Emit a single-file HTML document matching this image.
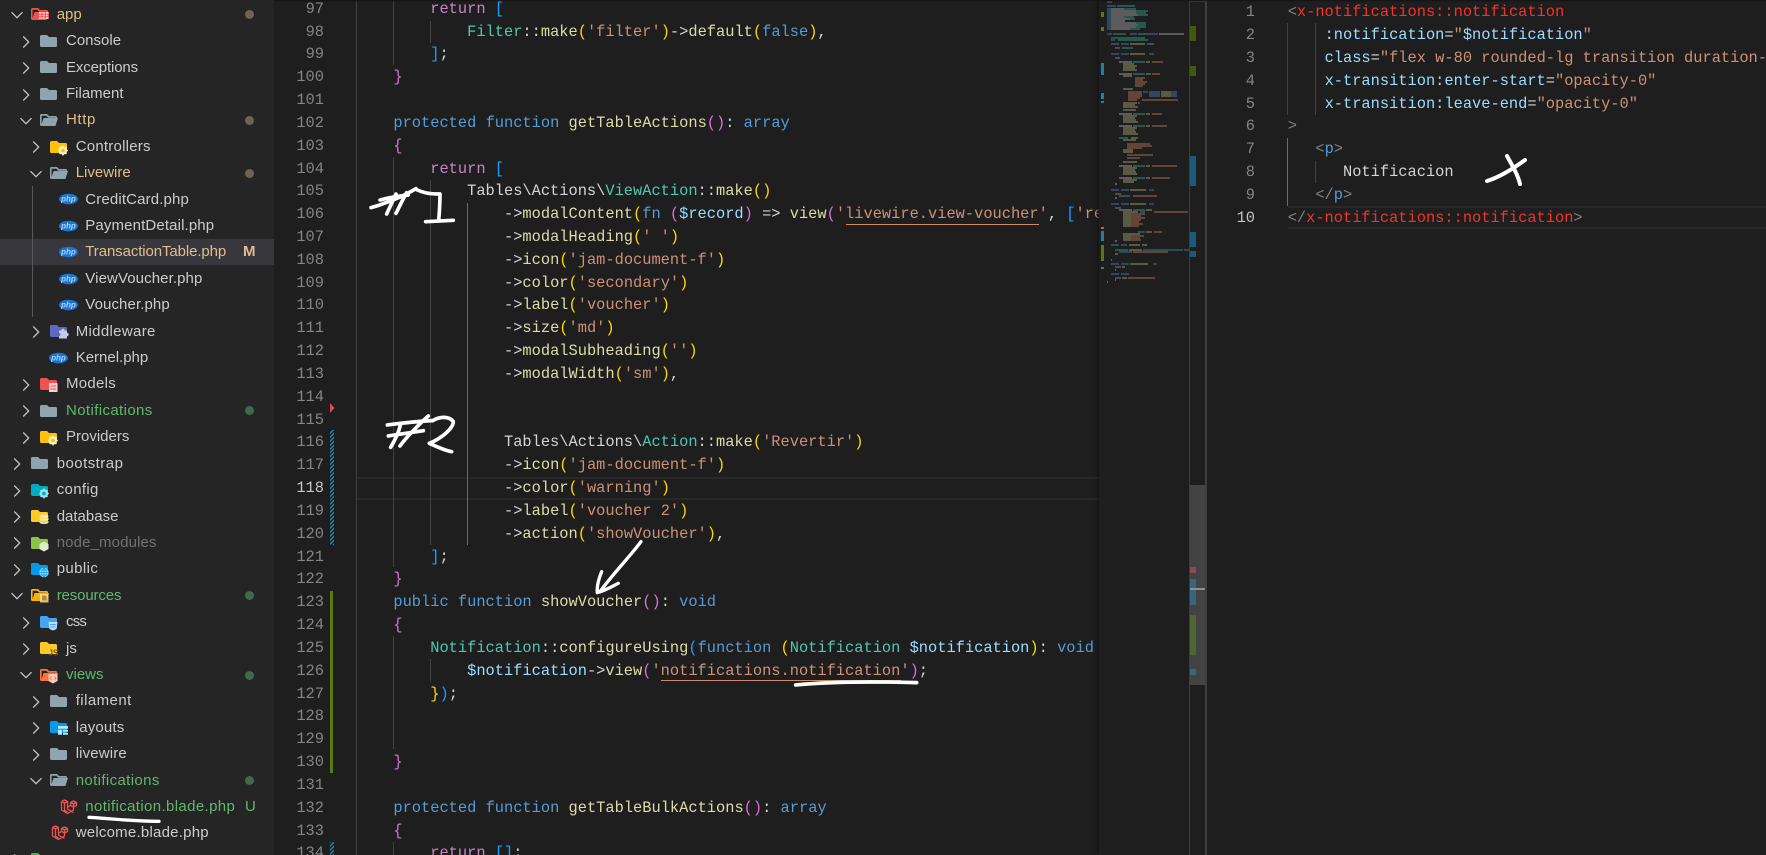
<!DOCTYPE html>
<html lang="en"><head><meta charset="utf-8"><title>Editor</title>
<style>
html,body{margin:0;padding:0;width:1766px;height:855px;overflow:hidden;background:#1e1e1e}
#root{position:absolute;left:0;top:0;width:1766px;height:855px;overflow:hidden;background:#1e1e1e}
.abs,.side,.nums,.code,.guide,.mm{position:absolute}
.side{left:0;top:0;width:274px;height:855px;background:#252526;overflow:hidden;font:15px/26.42px "Liberation Sans",sans-serif;color:#ccc}
.tree{position:absolute;left:0;top:1.8px;width:274px}
.r{position:relative;height:26.42px;white-space:nowrap}
.r span{position:absolute;top:0}
.r svg{position:absolute;top:3.7px;width:18px;height:18px;overflow:visible}
.r svg.c{width:16px;height:16px;top:5.5px}
.o{color:#dfbf8c}.gr{color:#5fb96c}.dim{color:#727272}
.dot{position:absolute;left:245px;top:8.6px;width:9px;height:9px;border-radius:50%;background:#6f6453}
.dot.g{background:#3d6a4a}
.sel{background:#37373d}
.bd{left:243px;font-weight:bold;font-size:15px}
.nums,.code{font:15.37px/22.83px "Liberation Mono",monospace}
.nums{text-align:right;color:#858585;white-space:pre;overflow:hidden}
.nums b{font-weight:normal;color:#c6c6c6}
.code{color:#d4d4d4;overflow:hidden}
.code div{height:22.83px;white-space:pre}
.k{color:#c586c0}.b{color:#569cd6}.f{color:#dcdcaa}.t{color:#4ec9b0}.s{color:#ce9178}.v{color:#9cdcfe}.g{color:#ffd700}.p{color:#da70d6}.u{color:#179fff}.a{color:#808080}.e{color:#f0342e}
.guide{width:1px;background:#404040}
.guide.h{background:#6a6a6a}
.hatch{position:absolute;left:330px;width:4px;background:repeating-linear-gradient(-45deg,#1f86ad 0 1.4px,#1e1e1e 1.4px 2.8px)}
</style></head>
<body>
<div id="root">
<svg width="0" height="0" style="position:absolute">
<defs>
<symbol id="fc" viewBox="0 0 18 18"><path fill="currentColor" d="M1.5 3H7l2 2h6.5A1.5 1.5 0 0 1 17 6.5v7a1.5 1.5 0 0 1-1.5 1.5h-14A1.5 1.5 0 0 1 0 13.5v-9A1.5 1.5 0 0 1 1.5 3z"/></symbol>
<symbol id="fo" viewBox="0 0 18 18"><path fill="currentColor" d="M1.5 3H7l2 2h6.5A1.5 1.5 0 0 1 17 6.5V8h-1.5V6.8H8.3l-2-2H1.6V13l2-6h14.4l-2.6 8H1.5A1.5 1.5 0 0 1 0 13.5v-9A1.5 1.5 0 0 1 1.5 3z"/></symbol>
<symbol id="cr" viewBox="0 0 16 16"><path fill="none" stroke="#c5c5c5" stroke-width="1.25" d="M5.2 2.5 10.7 8l-5.5 5.5"/></symbol>
<symbol id="cd" viewBox="0 0 16 16"><path fill="none" stroke="#c5c5c5" stroke-width="1.25" d="M2.5 5.2 8 10.7l5.5-5.5"/></symbol>
<symbol id="gear" viewBox="0 0 18 18"><circle cx="13" cy="12.5" r="3" fill="none" stroke="currentColor" stroke-width="2.2"/><path stroke="currentColor" stroke-width="1.6" d="M13 7.6v2M13 15.4v2M8.2 12.5h2M15.8 12.5h2M9.6 9.1l1.4 1.4M15 14.5l1.4 1.4M9.6 15.9l1.4-1.4M15 10.5l1.4-1.4"/></symbol>
<symbol id="lv" viewBox="0 0 18 18"><path fill="none" stroke="#ef5350" stroke-width="1.3" stroke-linejoin="round" d="M1.5 3.5 4.5 2l3 1.5V11l6 3.5M1.5 3.5V12l6 3.5 6-3.5V9l3-1.5v-3L13.5 3l-3 1.5v3L7.5 9.3M1.5 3.5l3 1.6 3-1.6M4.5 5.1v7.2l3 1.8M10.5 4.5l3 1.5 3-1.5M13.5 6v3M10.5 7.5l3 1.5"/></symbol>
</defs>
</svg>

<div class="side">
<div class="abs sel" style="left:0;top:239px;width:274px;height:26px"></div>
<div class="abs" style="left:32px;top:186px;width:1px;height:131px;background:#585858"></div>
<div class="tree">
<div class="r"><svg class="c" style="left:9px"><use href="#cd"/></svg><svg style="left:31px;color:#ef5350"><use href="#fo"/><path fill="#ffcdd2" d="M8 7h9.5v7H8z"/><path stroke="#ef5350" d="M8 9.3h10M8 11.7h10M11 7v7.500M14.300 7v7.500"/></svg><span class="o" style="left:56.700px">app</span><i class="dot"></i></div>
<div class="r"><svg class="c" style="left:18.300px"><use href="#cr"/></svg><svg style="left:40.300px;color:#90a4ae"><use href="#fc"/></svg><span style="left:66px">Console</span></div>
<div class="r"><svg class="c" style="left:18.300px"><use href="#cr"/></svg><svg style="left:40.300px;color:#90a4ae"><use href="#fc"/></svg><span style="left:66px;letter-spacing:-.14px">Exceptions</span></div>
<div class="r"><svg class="c" style="left:18.300px"><use href="#cr"/></svg><svg style="left:40.300px;color:#90a4ae"><use href="#fc"/></svg><span style="left:66px">Filament</span></div>
<div class="r"><svg class="c" style="left:18.300px"><use href="#cd"/></svg><svg style="left:40.300px;color:#90a4ae"><use href="#fo"/></svg><span class="o" style="left:66px;letter-spacing:.6px">Http</span><i class="dot"></i></div>
<div class="r"><svg class="c" style="left:27.700px"><use href="#cr"/></svg><svg style="left:49.700px;color:#ffc107"><use href="#fc"/><use href="#gear" style="color:#fff3c4" width="18" height="18"/></svg><span style="left:75.700px;letter-spacing:.23px">Controllers</span></div>
<div class="r"><svg class="c" style="left:27.700px"><use href="#cd"/></svg><svg style="left:49.700px;color:#90a4ae"><use href="#fo"/></svg><span class="o" style="left:75.700px">Livewire</span><i class="dot"></i></div>
<div class="r"><svg style="left:59px"><ellipse cx="9.500" cy="9" rx="9.500" ry="5.300" fill="#1976d2"/><text x="9.500" y="11.500" text-anchor="middle" font-family="Liberation Sans" font-size="8" font-style="italic" font-weight="bold" fill="#a9d2f7">php</text></svg><span style="left:85.300px;letter-spacing:.14px">CreditCard.php</span></div>
<div class="r"><svg style="left:59px"><ellipse cx="9.500" cy="9" rx="9.500" ry="5.300" fill="#1976d2"/><text x="9.500" y="11.500" text-anchor="middle" font-family="Liberation Sans" font-size="8" font-style="italic" font-weight="bold" fill="#a9d2f7">php</text></svg><span style="left:85.300px;letter-spacing:.13px">PaymentDetail.php</span></div>
<div class="r"><svg style="left:59px"><ellipse cx="9.500" cy="9" rx="9.500" ry="5.300" fill="#1976d2"/><text x="9.500" y="11.500" text-anchor="middle" font-family="Liberation Sans" font-size="8" font-style="italic" font-weight="bold" fill="#a9d2f7">php</text></svg><span class="o" style="left:85.300px;letter-spacing:-.1px">TransactionTable.php</span><span class="o bd">M</span></div>
<div class="r"><svg style="left:59px"><ellipse cx="9.500" cy="9" rx="9.500" ry="5.300" fill="#1976d2"/><text x="9.500" y="11.500" text-anchor="middle" font-family="Liberation Sans" font-size="8" font-style="italic" font-weight="bold" fill="#a9d2f7">php</text></svg><span style="left:85.300px;letter-spacing:.1px">ViewVoucher.php</span></div>
<div class="r"><svg style="left:59px"><ellipse cx="9.500" cy="9" rx="9.500" ry="5.300" fill="#1976d2"/><text x="9.500" y="11.500" text-anchor="middle" font-family="Liberation Sans" font-size="8" font-style="italic" font-weight="bold" fill="#a9d2f7">php</text></svg><span style="left:85.300px;letter-spacing:.1px">Voucher.php</span></div>
<div class="r"><svg class="c" style="left:27.700px"><use href="#cr"/></svg><svg style="left:49.700px;color:#5c6bc0"><use href="#fc"/><path fill="#c5cae9" d="M9 10h2.300a1.700 1.700 0 1 1 3.400 0H17v2.300a1.700 1.700 0 1 1 0 3.400V18H9v-2.500a1.500 1.500 0 1 0 0-3z" transform="translate(0 -1.500)"/></svg><span style="left:75.700px;letter-spacing:.33px">Middleware</span></div>
<div class="r"><svg style="left:49.300px"><ellipse cx="9.500" cy="9" rx="9.500" ry="5.300" fill="#1976d2"/><text x="9.500" y="11.500" text-anchor="middle" font-family="Liberation Sans" font-size="8" font-style="italic" font-weight="bold" fill="#a9d2f7">php</text></svg><span style="left:75.700px">Kernel.php</span></div>
<div class="r"><svg class="c" style="left:18.300px"><use href="#cr"/></svg><svg style="left:40.300px;color:#ef5350"><use href="#fc"/><path fill="#ffcdd2" d="M9 8h8.500v9H9z"/><path stroke="#ef5350" d="M10.500 11h5.500M10.500 14h5.500"/></svg><span style="left:66px;letter-spacing:.28px">Models</span></div>
<div class="r"><svg class="c" style="left:18.300px"><use href="#cr"/></svg><svg style="left:40.300px;color:#90a4ae"><use href="#fc"/></svg><span class="gr" style="left:66px;letter-spacing:.38px">Notifications</span><i class="dot g"></i></div>
<div class="r"><svg class="c" style="left:18.300px"><use href="#cr"/></svg><svg style="left:40.300px;color:#ffc107"><use href="#fc"/><use href="#gear" style="color:#fff3c4" width="18" height="18"/></svg><span style="left:66px">Providers</span></div>
<div class="r"><svg class="c" style="left:9px"><use href="#cr"/></svg><svg style="left:31px;color:#90a4ae"><use href="#fc"/></svg><span style="left:56.700px;letter-spacing:.46px">bootstrap</span></div>
<div class="r"><svg class="c" style="left:9px"><use href="#cr"/></svg><svg style="left:31px;color:#00acc1"><use href="#fc"/><use href="#gear" style="color:#9be7f2" width="18" height="18"/></svg><span style="left:56.700px;letter-spacing:.33px">config</span></div>
<div class="r"><svg class="c" style="left:9px"><use href="#cr"/></svg><svg style="left:31px;color:#ffca28"><use href="#fc"/><ellipse cx="13" cy="9.500" rx="4.500" ry="2" fill="#ffe9a8"/><path fill="#ffe9a8" d="M8.500 10.800c1.500 1.600 7.500 1.600 9 0v2c-1.500 1.600-7.500 1.600-9 0zM8.500 14c1.500 1.600 7.500 1.600 9 0v1.500c-1 2-8 2-9 0z"/></svg><span style="left:56.700px">database</span></div>
<div class="r"><svg class="c" style="left:9px"><use href="#cr"/></svg><svg style="left:31px;color:#8bc34a"><use href="#fc"/><path fill="#dcedc8" d="M13 7.500l4.500 2.500v5L13 17.500 8.500 15v-5z"/></svg><span class="dim" style="left:56.700px;letter-spacing:.13px">node_modules</span></div>
<div class="r"><svg class="c" style="left:9px"><use href="#cr"/></svg><svg style="left:31px;color:#039be5"><use href="#fc"/><circle cx="13" cy="12.500" r="4.700" fill="#b3e0fa"/><path fill="none" stroke="#039be5" stroke-width=".7" d="M8.300 12.500h9.400M13 7.800v9.400M9 10h8M9 15h8M13 7.800c-3 3-3 6.400 0 9.400M13 7.800c3 3 3 6.400 0 9.400"/></svg><span style="left:56.700px;letter-spacing:.4px">public</span></div>
<div class="r"><svg class="c" style="left:9px"><use href="#cd"/></svg><svg style="left:31px;color:#ffb300"><use href="#fo"/><path fill="#ffe0a0" fill-opacity=".8" d="M9 8h8.500v8.500H9z"/><path fill="#b58a38" d="M11 9.500h4.500v5H11z"/></svg><span class="gr" style="left:56.700px;letter-spacing:-.13px">resources</span><i class="dot g"></i></div>
<div class="r"><svg class="c" style="left:18.300px"><use href="#cr"/></svg><svg style="left:40.300px;color:#42a5f5"><use href="#fc"/><path fill="#bbdefb" d="M8.500 9h9l-.9 7-3.600 1.500L9.400 16z"/><path stroke="#42a5f5" d="M10 11.500h6M10.500 14h5"/></svg><span style="left:66px;letter-spacing:-.8px">css</span></div>
<div class="r"><svg class="c" style="left:18.300px"><use href="#cr"/></svg><svg style="left:40.300px;color:#ffca28"><use href="#fc"/><text x="8.500" y="16.500" font-family="Liberation Sans" font-size="8" font-weight="bold" fill="#7a5a10">JS</text></svg><span style="left:66px">js</span></div>
<div class="r"><svg class="c" style="left:18.300px"><use href="#cd"/></svg><svg style="left:40.300px;color:#ff7043"><use href="#fo"/><path fill="#ffccbc" d="M8.500 8h9v7l-4.500 2.500L8.500 15z"/><path fill="none" stroke="#ff7043" d="M11.500 10.500 10 12.200l1.500 1.700M14.500 10.500l1.500 1.700-1.500 1.700"/></svg><span class="gr" style="left:66px">views</span><i class="dot g"></i></div>
<div class="r"><svg class="c" style="left:27.700px"><use href="#cr"/></svg><svg style="left:49.700px;color:#90a4ae"><use href="#fc"/></svg><span style="left:75.700px;letter-spacing:.44px">filament</span></div>
<div class="r"><svg class="c" style="left:27.700px"><use href="#cr"/></svg><svg style="left:49.700px;color:#039be5"><use href="#fc"/><path fill="#b3e5fc" d="M8 8h10v2.700H8zM8 11.700h4v5H8zM13 11.700h5v2H13zM13 14.700h5v2H13z"/></svg><span style="left:75.700px;letter-spacing:.17px">layouts</span></div>
<div class="r"><svg class="c" style="left:27.700px"><use href="#cr"/></svg><svg style="left:49.700px;color:#90a4ae"><use href="#fc"/></svg><span style="left:75.700px;letter-spacing:.14px">livewire</span></div>
<div class="r"><svg class="c" style="left:27.700px"><use href="#cd"/></svg><svg style="left:49.700px;color:#90a4ae"><use href="#fo"/></svg><span class="gr" style="left:75.700px;letter-spacing:.37px">notifications</span><i class="dot g"></i></div>
<div class="r"><svg style="left:60px"><use href="#lv"/></svg><span class="gr" style="left:85.300px;letter-spacing:.37px">notification.blade.php</span><span class="gr bd" style="left:245px;font-weight:normal">U</span></div>
<div class="r"><svg style="left:50.500px"><use href="#lv"/></svg><span style="left:75.700px;letter-spacing:.23px">welcome.blade.php</span></div>
<div class="r"><svg class="c" style="left:9px"><use href="#cr"/></svg><svg style="left:31px;color:#4caf50"><use href="#fc"/></svg></div>
</div>
</div>

<!-- active-line highlights -->
<div class="abs" style="left:357px;top:477px;width:742px;height:18.500px;border:solid #282828;border-width:2px 0"></div>
<div class="abs" style="left:1288px;top:205.500px;width:478px;height:19px;border:solid #282828;border-width:2px 0"></div>

<!-- indent guides -->
<i class="guide" style="left:356px;top:0;height:855px"></i>
<i class="guide" style="left:393px;top:0;height:65px"></i>
<i class="guide" style="left:393px;top:157px;height:410px"></i>
<i class="guide" style="left:393px;top:636px;height:113px"></i>
<i class="guide" style="left:393px;top:842px;height:13px"></i>
<i class="guide" style="left:430px;top:21px;height:22px"></i>
<i class="guide" style="left:430px;top:180px;height:365px"></i>
<i class="guide" style="left:430px;top:659px;height:23px"></i>
<i class="guide h" style="left:467px;top:203px;height:342px"></i>
<i class="guide" style="left:1287px;top:23px;height:92px"></i>
<i class="guide h" style="left:1287px;top:138px;height:68px"></i>
<i class="guide" style="left:1315px;top:23px;height:92px"></i>
<i class="guide" style="left:1315px;top:161px;height:22px"></i>

<!-- left gutter -->
<div class="nums" style="left:280px;width:44px;top:-2.300px;height:857.300px">97
98
99
100
101
102
103
104
105
106
107
108
109
110
111
112
113
114
115
116
117
<b>118</b>
119
120
121
122
123
124
125
126
127
128
129
130
131
132
133
134</div>
<div class="hatch" style="top:430px;height:115px"></div>
<div class="hatch" style="top:842px;height:13px"></div>
<div class="abs" style="left:330px;top:591px;width:3px;height:182px;background:#587c0c"></div>
<svg class="abs" style="left:330px;top:403px" width="5" height="10"><path fill="#e4474f" d="M0 0l4.500 5L0 10z"/></svg>

<!-- left code -->
<div class="code" style="left:356.500px;top:-2.300px;width:742.500px;height:857.300px">
<div>        <span class="k">return</span> <span class="u">[</span></div>
<div>            <span class="t">Filter</span>::<span class="f">make</span><span class="g">(</span><span class="s">'filter'</span><span class="g">)</span>-&gt;<span class="f">default</span><span class="g">(</span><span class="b">false</span><span class="g">)</span>,</div>
<div>        <span class="u">]</span>;</div>
<div>    <span class="p">}</span></div>
<div></div>
<div>    <span class="b">protected</span> <span class="b">function</span> <span class="f">getTableActions</span><span class="p">()</span>: <span class="b">array</span></div>
<div>    <span class="p">{</span></div>
<div>        <span class="k">return</span> <span class="u">[</span></div>
<div>            Tables\Actions\<span class="t">ViewAction</span>::<span class="f">make</span><span class="g">()</span></div>
<div>                -&gt;<span class="f">modalContent</span><span class="g">(</span><span class="b">fn</span> <span class="p">(</span><span class="v">$record</span><span class="p">)</span> =&gt; <span class="f">view</span><span class="p">(</span><span class="s">'livewire.view-voucher'</span>, <span class="u">[</span><span class="s">'re</span></div>
<div>                -&gt;<span class="f">modalHeading</span><span class="g">(</span><span class="s">' '</span><span class="g">)</span></div>
<div>                -&gt;<span class="f">icon</span><span class="g">(</span><span class="s">'jam-document-f'</span><span class="g">)</span></div>
<div>                -&gt;<span class="f">color</span><span class="g">(</span><span class="s">'secondary'</span><span class="g">)</span></div>
<div>                -&gt;<span class="f">label</span><span class="g">(</span><span class="s">'voucher'</span><span class="g">)</span></div>
<div>                -&gt;<span class="f">size</span><span class="g">(</span><span class="s">'md'</span><span class="g">)</span></div>
<div>                -&gt;<span class="f">modalSubheading</span><span class="g">(</span><span class="s">''</span><span class="g">)</span></div>
<div>                -&gt;<span class="f">modalWidth</span><span class="g">(</span><span class="s">'sm'</span><span class="g">)</span>,</div>
<div></div>
<div></div>
<div>                Tables\Actions\<span class="t">Action</span>::<span class="f">make</span><span class="g">(</span><span class="s">'Revertir'</span><span class="g">)</span></div>
<div>                -&gt;<span class="f">icon</span><span class="g">(</span><span class="s">'jam-document-f'</span><span class="g">)</span></div>
<div>                -&gt;<span class="f">color</span><span class="g">(</span><span class="s">'warning'</span><span class="g">)</span></div>
<div>                -&gt;<span class="f">label</span><span class="g">(</span><span class="s">'voucher 2'</span><span class="g">)</span></div>
<div>                -&gt;<span class="f">action</span><span class="g">(</span><span class="s">'showVoucher'</span><span class="g">)</span>,</div>
<div>        <span class="u">]</span>;</div>
<div>    <span class="p">}</span></div>
<div>    <span class="b">public</span> <span class="b">function</span> <span class="f">showVoucher</span><span class="p">()</span>: <span class="b">void</span></div>
<div>    <span class="p">{</span></div>
<div>        <span class="t">Notification</span>::<span class="f">configureUsing</span><span class="u">(</span><span class="b">function</span> <span class="g">(</span><span class="t">Notification</span> <span class="v">$notification</span><span class="g">)</span>: <span class="b">void</span></div>
<div>            <span class="v">$notification</span>-&gt;<span class="f">view</span><span class="p">(</span><span class="s">'notifications.notification'</span><span class="p">)</span>;</div>
<div>        <span class="g">}</span><span class="u">)</span>;</div>
<div></div>
<div></div>
<div>    <span class="p">}</span></div>
<div></div>
<div>    <span class="b">protected</span> <span class="b">function</span> <span class="f">getTableBulkActions</span><span class="p">()</span>: <span class="b">array</span></div>
<div>    <span class="p">{</span></div>
<div>        <span class="k">return</span> <span class="u">[]</span>;</div>
</div>
<div class="abs" style="left:845.500px;top:224px;width:193.500px;height:1px;background:#d08a60"></div>
<div class="abs" style="left:661px;top:680px;width:240px;height:1px;background:#d08a60"></div>

<!-- minimap -->
<svg class="abs" style="left:1099px;top:0;background:#1e1e1e;box-shadow:-3px 0 4px -2px #111" width="90" height="855" viewBox="-1 0 90 855" fill="none" stroke-width="1.300">
<path stroke="#3b6082" d="M7 2h5M7 6h9M7 9h4M7 11h4M7 13h4M7 15h4M7 17h4M7 19h4M7 21h4M7 23h4M7 25h4M7 27h4M7 29h4M7 34h5M30 34h7M48 34h10M11 38h4M11 40h4M11 44h8M21 44h8M47 44h7M11 54h8M21 54h8M49 54h5M43 92h5M49 92h11M71 92h6M49 94h11M71 94h6M49 96h11M71 96h6M11 190h8M21 190h8M49 190h5M11 204h8M21 204h8M49 204h5M40 212h5M11 245h8M21 245h6M43 250h10M67 250h16M84 250h6M19 252h13M11 264h8M21 264h8M53 264h4M11 274h8M21 274h8"/>
<path stroke="#2f7a6a" d="M17 6h18M24 9h12M36 11h12M36 13h10M38 15h10M24 17h10M30 19h5M36 23h10M38 25h8M36 27h10M30 29h10M13 34h13M38 34h10M15 38h30M18 40h30M47 44h7M22 48h11M33 62h12M33 74h12M33 114h12M33 126h12M19 138h9M33 166h12M33 178h12M19 196h11M33 210h12M38 232h7M15 250h13M53 250h14"/>
<path stroke="#828282" d="M11 9h13M11 11h25M11 13h25M11 15h27M11 17h13M11 19h19M11 21h14M11 23h25M11 25h27M11 27h25M11 29h19M59 34h25M19 62h13M19 74h13M19 114h13M19 126h13M19 166h13M19 178h13M19 210h13M15 184h2M15 198h2M15 241h2M15 254h3M11 260h1M15 270h1M15 280h1M7 282h1"/>
<path stroke="#7f7f5c" d="M30 44h15M30 54h15M46 62h4M23 64h11M23 66h14M23 68h12M23 70h14M46 74h5M23 76h9M23 89h10M61 92h10M61 94h10M61 96h10M23 103h14M23 105h12M23 107h15M23 110h13M46 114h4M23 116h14M23 118h12M23 120h13M23 122h15M46 126h4M23 128h14M23 130h12M23 132h13M23 134h15M31 138h7M23 140h13M23 150h10M23 152h10M23 162h14M46 166h4M23 168h14M23 170h12M23 172h13M23 174h14M46 178h4M23 180h14M23 182h11M30 190h16M30 204h16M46 210h6M23 212h15M23 214h8M23 216h8M23 218h8M23 220h8M23 222h8M23 224h8M23 226h8M46 232h6M23 234h17M23 236h8M23 238h8M23 240h8M29 245h11M42 245h5M29 250h13M30 264h18M22 267h3M22 278h5"/>
<path stroke="#8a5d47" d="M52 62h11M52 74h8M35 78h10M35 80h8M35 82h12M35 84h10M35 86h8M28 92h14M28 94h14M28 96h14M28 98h12M28 100h9M42 100h36M38 103h2M52 114h10M52 126h15M27 144h23M27 146h25M27 148h15M27 155h13M40 155h13M27 158h13M52 166h25M52 178h18M33 196h24M54 212h34M31 214h14M31 216h10M31 218h14M31 220h10M31 222h8M31 224h12M31 226h8M54 232h8M31 236h13M31 238h9M31 240h10M33 252h35M28 278h27"/>
<path stroke="#7b5a79" d="M15 48h5M15 58h5M15 194h6M15 208h6M15 267h6M15 278h6"/>
<path d="M1 12h3v5H1zM1 27h3v4H1z" fill="#587c0c"/><path d="M1 63h3v12H1zM1 93h3v6H1zM1 101h3v2H1zM1 231h3v10H1zM1 267h3v2H1z" fill="#1b81a8"/><path d="M1 227h3v2H1z" fill="#e4474f"/><path d="M1 245h3v16H1z" fill="#587c0c"/>
</svg>

<!-- overview ruler -->
<div class="abs" style="left:1189px;top:0;width:1px;height:855px;background:#3c3c3c"></div>
<div class="abs" style="left:1189px;top:1px;width:16px;height:1px;background:#3c3c3c"></div>
<div class="abs" style="left:1205px;top:0;width:2px;height:855px;background:#3f3f3f"></div>
<div class="abs" style="left:1190px;top:485px;width:15px;height:200px;background:#434343"></div>
<div class="abs" style="left:1190px;top:26px;width:6px;height:15px;background:#40590f"></div>
<div class="abs" style="left:1190px;top:66px;width:6px;height:10px;background:#40590f"></div>
<div class="abs" style="left:1190px;top:156px;width:6px;height:30px;background:#1b5a78"></div>
<div class="abs" style="left:1190px;top:232px;width:6px;height:15px;background:#1b5a78"></div>
<div class="abs" style="left:1190px;top:251px;width:6px;height:6px;background:#1b5a78"></div>
<div class="abs" style="left:1190px;top:567px;width:6px;height:6px;background:#8c4a50"></div>
<div class="abs" style="left:1190px;top:579px;width:6px;height:26px;background:#39657f"></div>
<div class="abs" style="left:1190px;top:615px;width:6px;height:40px;background:#4f6633"></div>
<div class="abs" style="left:1190px;top:669px;width:6px;height:6px;background:#39657f"></div>
<div class="abs" style="left:1190px;top:588px;width:15px;height:2px;background:#8f8f8f"></div>

<!-- right pane -->
<div class="nums" style="left:1207px;width:48px;top:1.200px">1
2
3
4
5
6
7
8
9
<b>10</b></div>
<div class="code" style="left:1287.700px;top:1.200px;width:478.300px;height:240px">
<div><span class="a">&lt;</span><span class="e">x-notifications::notification</span></div>
<div>    <span class="v">:notification</span>=<span class="s">"</span><span class="v">$notification</span><span class="s">"</span></div>
<div>    <span class="v">class</span>=<span class="s">"flex w-80 rounded-lg transition duration-</span></div>
<div>    <span class="v">x-transition:enter-start</span>=<span class="s">"opacity-0"</span></div>
<div>    <span class="v">x-transition:leave-end</span>=<span class="s">"opacity-0"</span></div>
<div><span class="a">&gt;</span></div>
<div>   <span class="a">&lt;</span><span class="b">p</span><span class="a">&gt;</span></div>
<div>      Notificacion</div>
<div>   <span class="a">&lt;/</span><span class="b">p</span><span class="a">&gt;</span></div>
<div><span class="a">&lt;/</span><span class="e">x-notifications::notification</span><span class="a">&gt;</span></div>
</div>

<!-- top shadow -->
<div class="abs" style="left:274px;top:0;width:1492px;height:2px;background:linear-gradient(#121212,#1e1e1e00)"></div>

<!-- handwriting -->
<svg class="abs" style="left:0;top:0" width="1766" height="855" fill="none" stroke="#fff" stroke-linecap="round" stroke-linejoin="round">
<g transform="translate(360 180) scale(.3333)" stroke-width="11">
<path d="M33 83C70 72 120 55 168 26M60 60C90 52 120 48 145 45M80 102C90 80 100 60 108 42M108 100C118 80 130 55 140 38"/>
<path d="M172 30C190 38 205 42 240 42C240 70 238 100 236 122M197 125 280 121"/>
<path d="M82 735C120 730 160 725 215 722M85 768 190 752M92 802C105 780 118 755 122 730M120 798C140 770 180 730 205 708"/>
<path d="M218 722C235 712 265 705 280 725C280 745 245 775 208 790C230 800 255 812 275 815"/>
</g>
<g transform="translate(280 430) scale(.3333)" stroke-width="10">
<path d="M1083 335C1050 380 1000 430 960 485M965 425C955 450 950 470 952 488C975 482 995 470 1015 460"/>
</g>
<g transform="translate(780 430) scale(.3333)" stroke-width="11">
<path d="M47 765C150 755 300 755 410 758"/>
</g>
<g transform="translate(0 430) scale(.3333)" stroke-width="10">
<path d="M267 1162C330 1165 400 1175 477 1174"/>
</g>
<path stroke-width="4" d="M1507 156C1512 165 1518 175 1520 184M1525 160C1514 168 1500 177 1487 181"/>
</svg>
</div>
</body></html>
